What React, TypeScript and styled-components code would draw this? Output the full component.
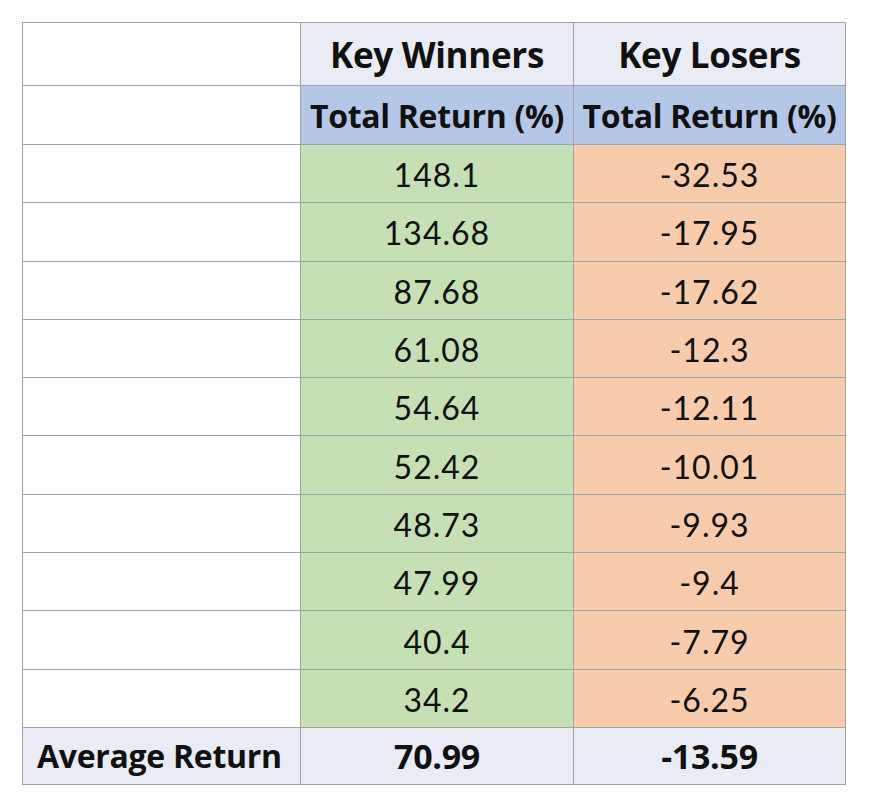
import React from 'react';
import styled, { createGlobalStyle } from 'styled-components';

type Tone = 'plain' | 'header' | 'sub' | 'win' | 'lose' | 'total';

const TONES: Record<Tone, string> = {
  plain: '#ffffff',
  header: '#e9ebf5',
  sub: '#b4c7e7',
  win: '#c5e0b4',
  lose: '#f8cbad',
  total: '#e9ebf5',
};

const rows: [string, string][] = [
  ['148.1', '-32.53'],
  ['134.68', '-17.95'],
  ['87.68', '-17.62'],
  ['61.08', '-12.3'],
  ['54.64', '-12.11'],
  ['52.42', '-10.01'],
  ['48.73', '-9.93'],
  ['47.99', '-9.4'],
  ['40.4', '-7.79'],
  ['34.2', '-6.25'],
];

const GlobalStyle = createGlobalStyle`
  html, body {
    margin: 0;
    padding: 0;
    background: #ffffff;
  }
  body {
    font-family: Lato, "Open Sans", "Liberation Sans", sans-serif;
    color: #000000;
  }
`;

const Page = styled.div`
  width: 870px;
  height: 810px;
  box-sizing: border-box;
  padding: 22px 0 0 22px;
`;

const Grid = styled.div`
  display: grid;
  width: max-content;
  grid-template-columns: 277px 272px 271px;
  grid-template-rows: 62px 58px repeat(10, 57.3px) 56px;
  gap: 1px;
  padding: 1px;
  background: #a3a3a3;
`;

const Cell = styled.div<{ tone: Tone; bold?: boolean; size?: number; left?: boolean }>`
  display: flex;
  align-items: center;
  justify-content: ${(props) => (props.left ? 'flex-start' : 'center')};
  padding-left: ${(props) => (props.left ? '14px' : '0')};
  padding-top: ${(props) => (props.bold ? '0' : '2px')};
  background: ${(props) => TONES[props.tone]};
  font-family: ${(props) => (props.bold ? '"Open Sans", Lato, sans-serif' : 'Lato, "Open Sans", sans-serif')};
  font-size: ${(props) => props.size ?? 32}px;
  font-weight: ${(props) => (props.bold ? 700 : 400)};
  letter-spacing: ${(props) => (props.bold ? '-0.3px' : '1px')};
  color: #111111;
  white-space: nowrap;
`;

export default function App() {
  return (
    <Page>
      <GlobalStyle />
      <Grid>
        <Cell tone="plain" />
        <Cell tone="header" bold size={35}>Key Winners</Cell>
        <Cell tone="header" bold size={35}>Key Losers</Cell>

        <Cell tone="plain" />
        <Cell tone="sub" bold size={32}>Total Return (%)</Cell>
        <Cell tone="sub" bold size={32}>Total Return (%)</Cell>

        {rows.map(([win, lose]) => (
          <React.Fragment key={win}>
            <Cell tone="plain" />
            <Cell tone="win">{win}</Cell>
            <Cell tone="lose">{lose}</Cell>
          </React.Fragment>
        ))}

        <Cell tone="total" bold left size={32}>Average Return</Cell>
        <Cell tone="total" bold size={34}>70.99</Cell>
        <Cell tone="total" bold size={34}>-13.59</Cell>
      </Grid>
    </Page>
  );
}
